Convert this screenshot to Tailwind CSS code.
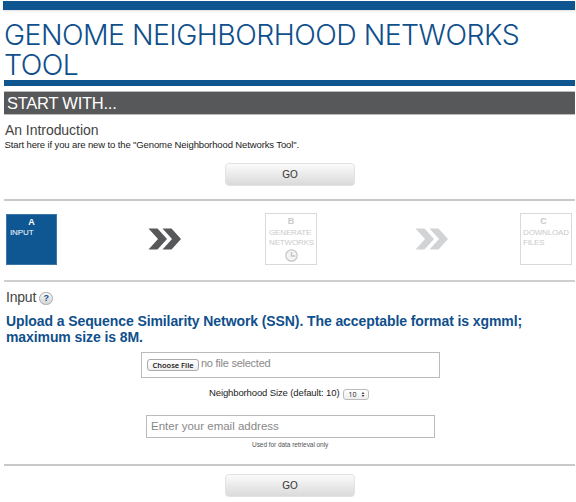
<!DOCTYPE html>
<html lang="en">
<head>
<meta charset="utf-8">
<title>Genome Neighborhood Networks Tool</title>
<script src="https://cdn.jsdelivr.net/npm/@tailwindcss/browser@4"></script>
</head>
<body class="bg-white">
<div class="flex h-[502px] w-[576px] flex-col overflow-hidden pt-px pr-px pl-1 font-['Liberation_Sans',Arial,sans-serif] text-[#333]">
  <div class="-ml-px h-[9px] shrink-0 bg-[#0f558f] shadow-[0_1px_2px_#ddd]"></div>
  <h1 class="mt-[10px] h-[60px] shrink-0 font-[Inter,sans-serif] text-[28.4px] leading-[30px] font-light tracking-[-0.52px] whitespace-nowrap text-[#0f4f8c]"><span class="block">GENOME NEIGHBORHOOD NETWORKS</span><span class="block">TOOL</span></h1>
  <div class="h-[6px] shrink-0 bg-[#0f558f]"></div>
  <h2 class="mt-[5px] h-[24px] shrink-0 border-y border-[#bbb] bg-[#575859] pl-[3px] text-[16.5px] leading-[22px] tracking-[-0.25px] text-white">START WITH...</h2>

  <section class="h-[84px] shrink-0 pt-[7px]">
    <h3 class="h-[16px] pl-px text-[14px] leading-[16px] tracking-[-0.05px] text-[#444]">An Introduction</h3>
    <p class="h-[13px] pl-[0.500px] text-[9.500px] leading-[13px] tracking-[-0.12px] whitespace-nowrap text-[#222]">Start here if you are new to the "Genome Neighborhood Networks Tool".</p>
    <button class="mt-[12px] ml-[221px] block h-[23px] w-[130px] rounded-[4px] border border-[#e2e2e2] bg-linear-to-b from-[#fbfbfb] to-[#dadada] text-center text-[10px] leading-[21px]">GO</button>
  </section>

  <section class="flex h-[81px] shrink-0 border-t-2 border-[#c9c9c9] pt-[13px] pl-[2px]">
    <div class="h-[51px] w-[51px] border border-[#3d77a8] bg-[#0f5793] pt-[3px] text-white">
      <div class="text-center text-[9px] leading-[9px] font-bold">A</div>
      <div class="mt-px pl-[3px] text-[8px] leading-[10px] tracking-[-0.1px]">INPUT</div>
    </div>
    <svg class="mt-[14px] ml-[91px] h-[22px] w-[34px]" viewBox="0 0 34 22" fill="#57585a"><path d="M.5.500h9l9.500 10.500-9.500 10.500h-9L10 11zM14.500.500h9L33 11l-9.500 10.500h-9L24 11z"/></svg>
    <div class="ml-[83px] -mt-px h-[52px] w-[52px] border border-[#d8d9da] pt-[3px] text-[#c9cacc]">
      <div class="text-center text-[9px] leading-[9px] font-bold">B</div>
      <div class="mt-[2px] pl-[3px] text-[8px] leading-[10px] tracking-[-0.15px]">GENERATE<br>NETWORKS</div>
      <svg class="mx-auto mt-px h-[13px] w-[13px]" viewBox="0 0 13 13" fill="#f4f4f4" stroke="#c5c6c8" stroke-width="1.200"><circle cx="6.500" cy="6.500" r="5.700"/><path d="M6.500 3v4h4" fill="none" stroke-width="1.500"/></svg>
    </div>
    <svg class="mt-[14px] ml-[98px] h-[22px] w-[34px]" viewBox="0 0 34 22" fill="#d2d3d5"><path d="M.5.500h9l9.500 10.500-9.500 10.500h-9L10 11zM14.500.500h9L33 11l-9.500 10.500h-9L24 11z"/></svg>
    <div class="ml-[71px] -mt-px h-[52px] w-[52px] border border-[#d8d9da] pt-[3px] text-[#c9cacc]">
      <div class="pr-[5px] text-center text-[9px] leading-[9px] font-bold">C</div>
      <div class="mt-[2px] pl-[2px] text-[8px] leading-[10px] tracking-[-0.15px]">DOWNLOAD<br>FILES</div>
    </div>
  </section>

  <section class="h-[184px] shrink-0 border-t-2 border-[#cfcfcf] pt-[6px]">
    <div class="flex h-[18px] pl-[2px] text-[14px] leading-[18px] tracking-[-0.2px] text-[#444]">
      <h3>Input</h3>
      <span class="mt-[4px] ml-[3px] block h-[13px] w-[14px] rounded-full border border-[#aaa] bg-linear-to-b from-[#fafafa] to-[#d4d4d4] text-center text-[9px] leading-[11px] font-bold text-[#0f4f8c]">?</span>
    </div>
    <p class="mt-[7px] h-[32px] pl-[2px] text-[14px] leading-[16px] font-bold tracking-[-0.09px] whitespace-nowrap text-[#0f4f8c]">Upload a Sequence Similarity Network (SSN). The acceptable format is xgmml;<br>maximum size is 8M.</p>
    <div class="mt-[7px] ml-[137px] flex h-[26px] w-[299px] border border-[#bbb] pt-[6px] pl-[5px]">
      <button class="h-[12px] w-[52px] rounded-[3px] border border-[#aaa] bg-linear-to-b from-white to-[#eee] text-center font-['Open_Sans',sans-serif] text-[7.500px] leading-[10px] font-semibold whitespace-nowrap text-[#111]">Choose File</button>
      <span class="-mt-[2px] ml-[2px] text-[11px] leading-[12px] tracking-[-0.25px] text-[#888]">no file selected</span>
    </div>
    <div class="mt-[8px] ml-[205px] flex h-[15px] items-center text-[9.500px] text-[#222]">
      <label class="tracking-[-0.12px] whitespace-nowrap">Neighborhood Size (default: 10)</label>
      <span class="mt-[2px] ml-[4px] flex h-[11px] w-[26px] items-center justify-between rounded-[3px] border border-[#bbb] bg-linear-to-b from-white to-[#eee] pr-[3px] pl-[4px] font-['Open_Sans',sans-serif] text-[7px] leading-[9px]">10<svg class="h-[5px] w-[4px]" viewBox="0 0 4 5" fill="#444"><path d="M2 0l1.500 2H.500zM2 5L.500 3h3z"/></svg></span>
    </div>
    <div class="mt-[14px] ml-[142px] h-[23px] w-[289px] border border-[#bbb] pl-[4px] text-[11.500px] leading-[21px] text-[#888]">Enter your email address</div>
    <p class="mt-[1px] ml-[248px] text-[6.500px] leading-[11px] tracking-[-0.05px] whitespace-nowrap text-[#555]">Used for data retrieval only</p>
  </section>

  <section class="shrink-0 border-t-2 border-[#c9c9c9] pt-[8px]">
    <button class="ml-[221px] block h-[23px] w-[130px] rounded-[4px] border border-[#e2e2e2] bg-linear-to-b from-[#fbfbfb] to-[#dadada] text-center text-[10px] leading-[21px]">GO</button>
  </section>
</div>
</body>
</html>
